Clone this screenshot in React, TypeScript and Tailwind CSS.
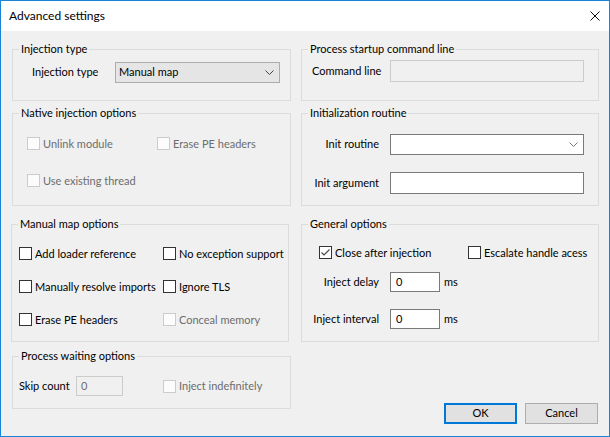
import type { ReactNode } from 'react';

function GroupBox({
  title,
  className,
  children,
}: {
  title: string;
  className: string;
  children: ReactNode;
}) {
  return (
    <div className={`relative border border-[#dcdcdc] ${className}`}>
      <span className="absolute left-[6px] top-[-8px] bg-[#f0f0f0] px-[2px] leading-[14px] whitespace-nowrap">
        {title}
      </span>
      {children}
    </div>
  );
}

function Checkbox({
  label,
  checked = false,
  disabled = false,
}: {
  label: string;
  checked?: boolean;
  disabled?: boolean;
}) {
  return (
    <div className="flex h-[13px] items-center gap-[3px]">
      <span
        className={
          disabled
            ? 'flex h-[13px] w-[13px] shrink-0 border border-[#cccccc] bg-[#fcfcfc]'
            : 'flex h-[13px] w-[13px] shrink-0 items-center justify-center border border-[#333333] bg-white'
        }
      >
        {checked && (
          <svg width="11" height="11" viewBox="0 0 11 11">
            <path d="M1.5 5.5 L4 8 L9.5 2.5" fill="none" stroke="#444444" strokeWidth="1.1" />
          </svg>
        )}
      </span>
      <span className={`whitespace-nowrap leading-[14px] ${disabled ? 'text-[#6d6d6d]' : 'text-black'}`}>
        {label}
      </span>
    </div>
  );
}

function Chevron({ color }: { color: string }) {
  return (
    <svg width="9" height="5" viewBox="0 0 9 5">
      <polyline points="0.5,0.5 4.5,4.5 8.5,0.5" fill="none" stroke={color} strokeWidth="1" />
    </svg>
  );
}

function Field({ label, children }: { label: string; children: ReactNode }) {
  return (
    <div className="flex items-center">
      <span className="mr-[11px] w-[67px] text-right whitespace-nowrap">{label}</span>
      {children}
    </div>
  );
}

export default function App() {
  return (
    <div className="flex h-[437px] w-[610px] flex-col border border-[#1883d7] bg-[#f0f0f0] font-['Lato','Segoe_UI',sans-serif] text-[11px] text-black">
      {/* Title bar */}
      <div className="flex h-[30px] shrink-0 items-center justify-between bg-white pl-[8px] pr-[9px]">
        <span className="text-[12px]">Advanced settings</span>
        <svg width="10" height="10" viewBox="0 0 10 10">
          <path d="M0.5 0.5 L9.5 9.5 M9.5 0.5 L0.5 9.5" stroke="#111111" strokeWidth="1" />
        </svg>
      </div>

      <div className="flex gap-[10px] pl-[11px] pt-[18px]">
        {/* Left column */}
        <div className="flex w-[279px] flex-col">
          <GroupBox title="Injection type" className="h-[52px] pl-[19px] pt-[12px]">
            <div className="flex items-center">
              <span className="w-[83px]">Injection type</span>
              <div className="flex h-[21px] w-[165px] items-center justify-between border border-[#adadad] bg-[#e5e5e5] pl-[3px] pr-[5px]">
                <span>Manual map</span>
                <Chevron color="#444444" />
              </div>
            </div>
          </GroupBox>

          <GroupBox title="Native injection options" className="mt-[12px] h-[93px] pl-[14px] pt-[23px]">
            <div className="grid grid-cols-[130px_auto] gap-y-[24px]">
              <Checkbox label="Unlink module" disabled />
              <Checkbox label="Erase PE headers" disabled />
              <Checkbox label="Use existing thread" disabled />
            </div>
          </GroupBox>

          <GroupBox title="Manual map options" className="ml-[-1px] mt-[18px] h-[118px] w-[278px] pl-[7px] pt-[22px]">
            <div className="grid grid-cols-[144px_auto] gap-y-[20px]">
              <Checkbox label="Add loader reference" />
              <Checkbox label="No exception support" />
              <Checkbox label="Manually resolve imports" />
              <Checkbox label="Ignore TLS" />
              <Checkbox label="Erase PE headers" />
              <Checkbox label="Conceal memory" disabled />
            </div>
          </GroupBox>

          <GroupBox title="Process waiting options" className="mt-[14px] h-[53px] pl-[6px] pt-[19px]">
            <div className="flex items-center">
              <span className="w-[57px]">Skip count</span>
              <div className="flex h-[20px] w-[47px] items-center border border-[#cccccc] bg-[#f0f0f0] pl-[4px] text-[#6d6d6d]">
                0
              </div>
              <div className="ml-[40px]">
                <Checkbox label="Inject indefinitely" disabled />
              </div>
            </div>
          </GroupBox>
        </div>

        {/* Right column */}
        <div className="flex w-[298px] flex-col">
          <GroupBox title="Process startup command line" className="h-[52px] pl-[10px] pt-[10px]">
            <Field label="Command line">
              <div className="h-[22px] w-[194px] border border-[#cccccc] bg-[#f0f0f0]" />
            </Field>
          </GroupBox>

          <GroupBox title="Initialization routine" className="mt-[12px] h-[93px] pl-[10px] pt-[20px]">
            <Field label="Init routine">
              <div className="flex h-[21px] w-[194px] items-center justify-end border border-[#7a7a7a] bg-white pr-[5px]">
                <Chevron color="#777777" />
              </div>
            </Field>
            <div className="mt-[17px]">
              <Field label="Init argument">
                <div className="h-[22px] w-[194px] border border-[#7a7a7a] bg-white" />
              </Field>
            </div>
          </GroupBox>

          <GroupBox title="General options" className="mt-[18px] h-[118px] pt-[21px]">
            <div className="flex pl-[17px]">
              <div className="w-[149px]">
                <Checkbox label="Close after injection" checked />
              </div>
              <Checkbox label="Escalate handle acess" />
            </div>
            <div className="mt-[13px] pl-[10px]">
              <Field label="Inject delay">
                <div className="flex h-[20px] w-[50px] items-center border border-[#7a7a7a] bg-white pl-[5px]">0</div>
                <span className="ml-[4px]">ms</span>
              </Field>
            </div>
            <div className="mt-[17px] pl-[10px]">
              <Field label="Inject interval">
                <div className="flex h-[20px] w-[50px] items-center border border-[#7a7a7a] bg-white pl-[5px]">0</div>
                <span className="ml-[4px]">ms</span>
              </Field>
            </div>
          </GroupBox>

          <div className="mt-[61px] flex justify-end gap-[8px] pr-[1px]">
            <button className="flex h-[21px] w-[73px] items-center justify-center border-2 border-[#0078d7] bg-[#e1e1e1]">
              OK
            </button>
            <button className="flex h-[21px] w-[73px] items-center justify-center border border-[#adadad] bg-[#e1e1e1]">
              Cancel
            </button>
          </div>
        </div>
      </div>
    </div>
  );
}
